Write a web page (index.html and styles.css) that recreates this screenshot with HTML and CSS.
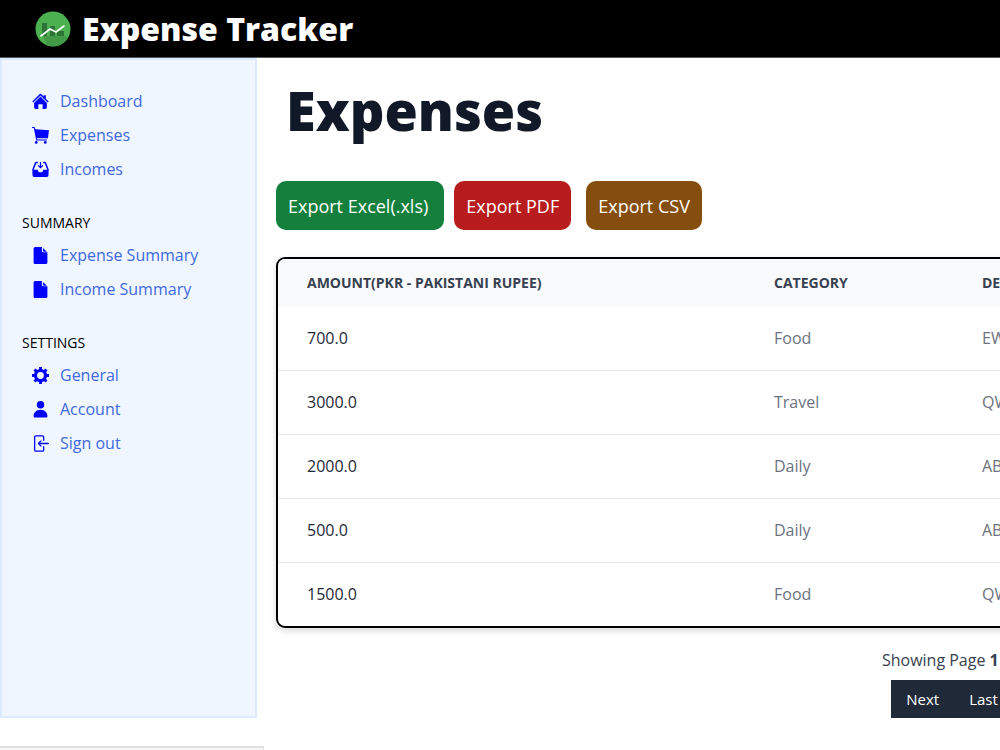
FILE: index.html
```html
<!DOCTYPE html>
<html lang="en">
<head>
  <meta charset="UTF-8" />
  <meta name="viewport" content="width=device-width, initial-scale=1" />
  <title>Expense Tracker</title>
  <link rel="stylesheet" href="styles.css">
</head>
<body>
  <header class="topbar">
    <svg class="logo" viewBox="0 0 36 36" aria-hidden="true">
      <circle cx="18" cy="18" r="17.5" fill="#4caf50" />
      <path d="M8 25h22l3 2A17.5 17.5 0 0 1 12 34z" fill="#429a46" />
      <path d="M7 12h5v13H7zM15 15h5v10h-5zM22 20h7v5h-7z" fill="#2c7335" />
      <path d="M6 25l9-7 6 3 8-6" fill="none" stroke="#fff" stroke-width="1.6" stroke-linejoin="round" stroke-linecap="round" />
    </svg>
    <span class="brand">Expense Tracker</span>
  </header>

  <div class="layout">
    <nav class="sidebar">
      <ul class="menu">
        <li><a href="#">
          <svg class="icon" viewBox="0 0 16 16"><path d="M8 3.3l6 6V13.5A1.5 1.5 0 0 1 12.500 15H10v-4.500H6V15H3.500A1.500 1.500 0 0 1 2 13.500V9.300z"/><path d="M7.300 1a1 1 0 0 1 1.400 0L11 3.300V2h2v3.300l2.700 2.700-1 1L8 2.300 1.300 9l-1-1z"/></svg>
          Dashboard</a></li>
        <li><a href="#">
          <svg class="icon" viewBox="0 0 16 16"><path d="M0 0h2.400l.8 2L16 3l-1 7.500H4.600l.3 1.300H14v1H4L1.700 1H0z"/><circle cx="4" cy="14.500" r="1.300"/><circle cx="12.500" cy="14.500" r="1.300"/></svg>
          Expenses</a></li>
        <li><a href="#">
          <svg class="icon" viewBox="0 0 16 16"><path d="M5.500 1.500H4.200a1 1 0 0 0-.9.500L.8 8.500M10.500 1.500h1.300a1 1 0 0 1 .9.500l2.500 6.500" fill="none" stroke="currentColor" stroke-width="1.400"/><path d="M.3 8.200h5.200a2.500 2.500 0 0 0 5 0h5.200l-.2 5.300a1.500 1.500 0 0 1-1.500 1.500H2a1.500 1.500 0 0 1-1.500-1.500z"/><path d="M7.400 1h1.200v4l1.400-1.300.7.800L8 7 5.300 4.500l.7-.8L7.400 5z"/></svg>
          Incomes</a></li>
      </ul>

      <h2 class="menu-title">SUMMARY</h2>
      <ul class="menu">
        <li><a href="#">
          <svg class="icon" viewBox="0 0 16 16"><path d="M3 0h6.300v3.500a1.500 1.500 0 0 0 1.500 1.500H14.500v9.500A1.500 1.500 0 0 1 13 16H3a1.500 1.500 0 0 1-1.500-1.500v-13A1.500 1.500 0 0 1 3 0zM10.300 1l3.700 3.500h-2.700a1 1 0 0 1-1-1z"/></svg>
          Expense Summary</a></li>
        <li><a href="#">
          <svg class="icon" viewBox="0 0 16 16"><path d="M3 0h6.300v3.500a1.500 1.500 0 0 0 1.500 1.500H14.500v9.500A1.500 1.500 0 0 1 13 16H3a1.500 1.500 0 0 1-1.500-1.500v-13A1.500 1.500 0 0 1 3 0zM10.300 1l3.700 3.500h-2.700a1 1 0 0 1-1-1z"/></svg>
          Income Summary</a></li>
      </ul>

      <h2 class="menu-title">SETTINGS</h2>
      <ul class="menu">
        <li><a href="#">
          <svg class="icon" viewBox="0 0 16 16"><circle cx="8" cy="8" r="4.700" fill="none" stroke="currentColor" stroke-width="3"/><path d="M6.700 0h2.600v3H6.700zM6.700 13h2.600v3H6.700zM0 6.700h3v2.600H0zM13 6.700h3v2.600h-3zM1.400 3.300l1.900-1.900 2 2-1.900 1.900zM12.700 1.400l1.900 1.900-2 2-1.900-1.900zM3.400 10.700l1.900 1.900-2 2-1.900-1.900zM12.600 10.700l2 2-1.900 1.900-2-2z"/></svg>
          General</a></li>
        <li><a href="#">
          <svg class="icon" viewBox="0 0 16 16"><circle cx="8" cy="3.500" r="3.500"/><path d="M1.500 14c0-3 2.500-5.800 6.500-5.800s6.500 2.800 6.500 5.800c0 1-.5 1.500-1.500 1.500H3c-1 0-1.500-.5-1.500-1.500z"/></svg>
          Account</a></li>
        <li><a href="#">
          <svg class="icon icon-line" viewBox="0 0 16 16"><path d="M11 5V2a1.200 1.200 0 0 0-1.200-1.200H3.700A1.200 1.200 0 0 0 2.500 2v12a1.200 1.200 0 0 0 1.200 1.200h6.100A1.200 1.200 0 0 0 11 14v-3M15.300 8H6M8.500 5.500L6 8l2.500 2.500"/></svg>
          Sign out</a></li>
      </ul>
    </nav>

    <main class="content">
      <h1>Expenses</h1>

      <div class="exports">
        <button class="btn btn-excel">Export Excel(.xls)</button>
        <button class="btn btn-pdf">Export PDF</button>
        <button class="btn btn-csv">Export CSV</button>
      </div>

      <div class="table-card">
        <table>
          <thead>
            <tr>
              <th class="col-amount">Amount(PKR - Pakistani Rupee)</th>
              <th class="col-category">Category</th>
              <th>Description</th>
            </tr>
          </thead>
          <tbody>
            <tr><td class="amount">700.0</td><td>Food</td><td>EW</td></tr>
            <tr><td class="amount">3000.0</td><td>Travel</td><td>QW</td></tr>
            <tr><td class="amount">2000.0</td><td>Daily</td><td>AB</td></tr>
            <tr><td class="amount">500.0</td><td>Daily</td><td>AB</td></tr>
            <tr><td class="amount">1500.0</td><td>Food</td><td>QW</td></tr>
          </tbody>
        </table>
      </div>

      <div class="pagination">
        <span>Showing Page <strong>1</strong> / 2</span>
        <div class="pages">
          <button>Next</button>
          <button>Last</button>
        </div>
      </div>
    </main>
  </div>

  <div class="status"></div>
</body>
</html>
```
FILE: styles.css
```css
* { box-sizing: border-box; }
body {
  margin: 0;
  background: #fff;
  color: #111827;
  font-family: "Segoe UI", "Open Sans", sans-serif;
  font-size: 16px;
  line-height: 24px;
  overflow-x: hidden;
}
.topbar {
  display: flex;
  align-items: center;
  gap: 11px;
  height: 58px;
  padding: 0 35px;
  background: #000;
  border-bottom: 1px solid #555;
}
.logo {
  width: 36px;
  height: 36px;
}
.brand {
  color: #fff;
  font-size: 32px;
  font-weight: 800;
  line-height: 40px;
}
.layout {
  display: grid;
  grid-template-columns: 257px minmax(0, 1fr);
}
.sidebar {
  background: #eff6ff;
  border: 2px solid #dbeafe;
  padding: 24px 20px;
}
.menu {
  list-style: none;
  margin: 0 0 22px;
  padding: 0;
}
.menu a {
  display: flex;
  align-items: center;
  gap: 11px;
  height: 34px;
  padding-left: 10px;
  color: #4169e1;
  text-decoration: none;
}
.icon {
  width: 17px;
  height: 17px;
  color: #00f;
  fill: currentColor;
}
.icon-line {
  fill: none;
  stroke: currentColor;
  stroke-width: 1.2;
  stroke-linecap: round;
  stroke-linejoin: round;
}
.menu-title {
  margin: 0;
  color: #000;
  font-size: 14px;
  font-weight: 400;
  line-height: 30px;
}
.content {
  padding: 20px 0 0 19px;
  overflow: hidden;
}
h1 {
  margin: 0 0 39px;
  padding-left: 10px;
  font-size: 54px;
  font-weight: 800;
  line-height: 64px;
}
.exports {
  display: flex;
  gap: 10px;
  margin-bottom: 27px;
}
.btn {
  height: 49px;
  padding: 0 12px;
  border: none;
  border-radius: 10px;
  color: #fff;
  font: inherit;
  font-size: 18px;
  cursor: pointer;
}
.btn-excel {
  background: #15803d;
  padding-right: 16px;
}
.btn-pdf { background: #b91c1c; }
.btn-csv {
  background: #854d0e;
  margin-left: 5px;
}
.table-card {
  width: 1352px;
  border: 2px solid #000;
  border-radius: 9px;
  box-shadow: 0 3px 6px rgba(0,0,0,0.15);
  overflow: hidden;
}
table {
  width: 100%;
  border-collapse: collapse;
  table-layout: fixed;
}
th, td {
  padding: 0 29px;
  text-align: left;
}
th {
  height: 47px;
  background: #f9fafb;
  color: #374151;
  font-size: 14px;
  font-weight: 700;
  text-transform: uppercase;
  white-space: nowrap;
}
.col-amount { width: 467px; }
.col-category { width: 208px; }
td {
  height: 64px;
  color: #6b7280;
}
tbody tr + tr {
  border-top: 1px solid #e5e7eb;
}
.amount { color: #1f2937; }
.pagination {
  display: flex;
  flex-direction: column;
  align-items: center;
  gap: 8px;
  width: 1352px;
  padding-top: 20px;
  color: #374151;
}
.pages {
  display: flex;
  background: #1f2937;
}
.pages button {
  height: 38px;
  padding: 0 15px;
  border: none;
  background: transparent;
  color: #fff;
  font: inherit;
  font-size: 15px;
  cursor: pointer;
}
.status {
  position: fixed;
  left: 0;
  bottom: 0;
  width: 264px;
  height: 4px;
  background: #f8f8f8;
  border-top: 2px solid #e0e0e0;
  border-right: 1px solid #e0e0e0;
}
```
